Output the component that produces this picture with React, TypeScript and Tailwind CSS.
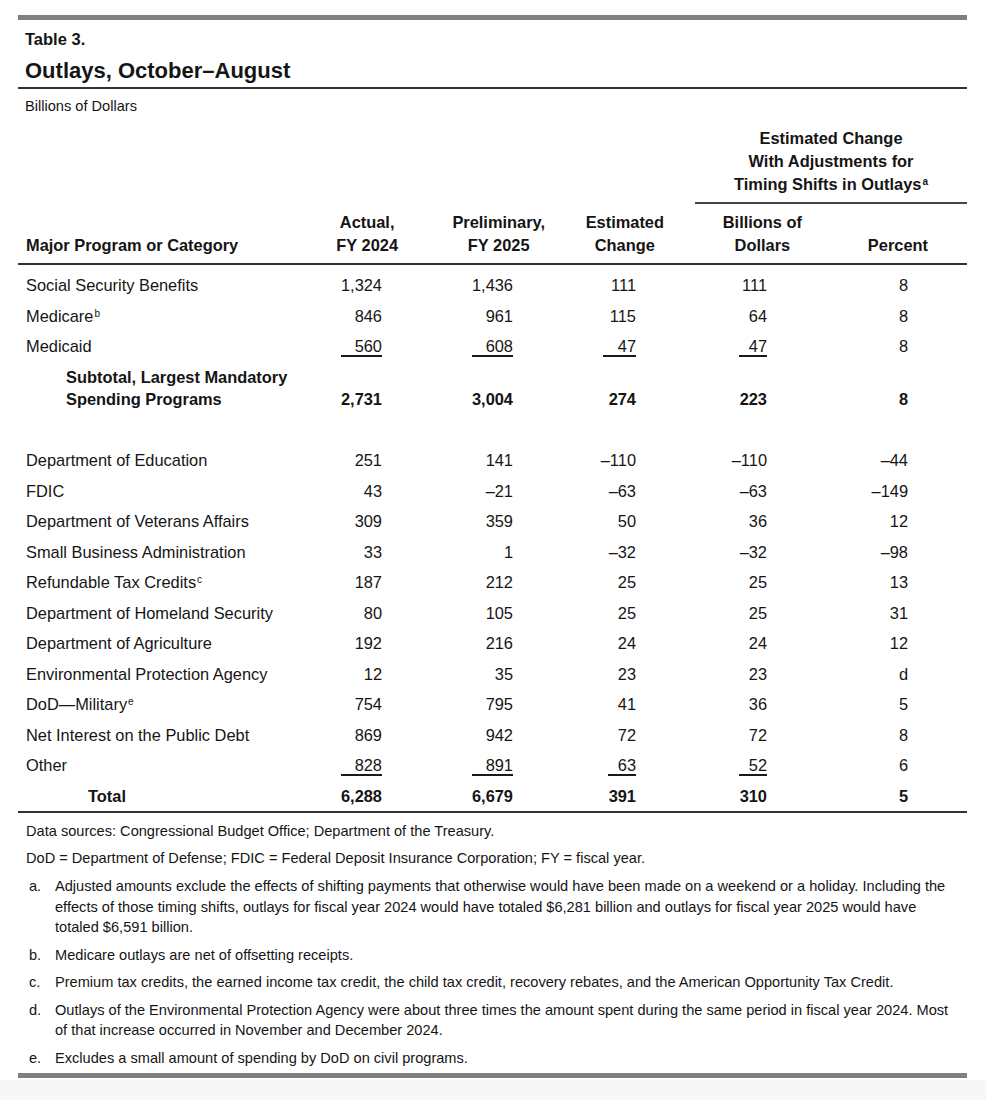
import React from "react";

type Row = {
  label: React.ReactNode;
  vals: string[];
  ul?: (number | null)[];
};

const GRID = "grid grid-cols-[282px_120px_140px_120px_140px_147px]";
const NUM_PAD = ["", "pr-[38px]", "pr-[47px]", "pr-[44px]", "pr-[53px]", "pr-[59px]"];
const UL_W: Record<number, string> = {
  41: "min-w-[41px]",
  33: "min-w-[33px]",
  28: "min-w-[28px]",
};

function Sup({ c }: { c: string }) {
  return <span className="relative -top-[5px] text-[10px] leading-none ml-[1px]">{c}</span>;
}

function Num({ v, col, ul }: { v: string; col: number; ul?: number | null }) {
  return (
    <div className={`flex justify-end items-center ${NUM_PAD[col]}`}>
      {ul ? (
        <span className={`inline-block text-right border-b-2 border-[#1a1a1a] leading-[17px] mt-[2px] ${UL_W[ul]}`}>{v}</span>
      ) : (
        <span>{v}</span>
      )}
    </div>
  );
}

function DataRow({ r }: { r: Row }) {
  return (
    <div className={`${GRID} h-[30.5px] items-center`}>
      <div className="pl-[8px] whitespace-nowrap">{r.label}</div>
      {r.vals.map((v, i) => (
        <Num key={i} v={v} col={i + 1} ul={r.ul ? r.ul[i] : null} />
      ))}
    </div>
  );
}

const top: Row[] = [
  { label: "Social Security Benefits", vals: ["1,324", "1,436", "111", "111", "8"] },
  { label: <>Medicare<Sup c="b" /></>, vals: ["846", "961", "115", "64", "8"] },
  { label: "Medicaid", vals: ["560", "608", "47", "47", "8"], ul: [41, 41, 33, 28, null] },
];

const bottom: Row[] = [
  { label: "Department of Education", vals: ["251", "141", "–110", "–110", "–44"] },
  { label: "FDIC", vals: ["43", "–21", "–63", "–63", "–149"] },
  { label: "Department of Veterans Affairs", vals: ["309", "359", "50", "36", "12"] },
  { label: "Small Business Administration", vals: ["33", "1", "–32", "–32", "–98"] },
  { label: <>Refundable Tax Credits<Sup c="c" /></>, vals: ["187", "212", "25", "25", "13"] },
  { label: "Department of Homeland Security", vals: ["80", "105", "25", "25", "31"] },
  { label: "Department of Agriculture", vals: ["192", "216", "24", "24", "12"] },
  { label: "Environmental Protection Agency", vals: ["12", "35", "23", "23", "d"] },
  { label: <>DoD—Military<Sup c="e" /></>, vals: ["754", "795", "41", "36", "5"] },
  { label: "Net Interest on the Public Debt", vals: ["869", "942", "72", "72", "8"] },
  { label: "Other", vals: ["828", "891", "63", "52", "6"], ul: [41, 41, 28, 28, null] },
];

const notes: [string, string][] = [
  [
    "a.",
    "Adjusted amounts exclude the effects of shifting payments that otherwise would have been made on a weekend or a holiday. Including the effects of those timing shifts, outlays for fiscal year 2024 would have totaled $6,281 billion and outlays for fiscal year 2025 would have totaled $6,591 billion.",
  ],
  ["b.", "Medicare outlays are net of offsetting receipts."],
  [
    "c.",
    "Premium tax credits, the earned income tax credit, the child tax credit, recovery rebates, and the American Opportunity Tax Credit.",
  ],
  [
    "d.",
    "Outlays of the Environmental Protection Agency were about three times the amount spent during the same period in fiscal year 2024. Most of that increase occurred in November and December 2024.",
  ],
  ["e.", "Excludes a small amount of spending by DoD on civil programs."],
];

export default function App() {
  return (
    <div className="w-[986px] h-[1100px] bg-[#f7f7f7] font-['Liberation_Sans',Arial,sans-serif] text-[#151515]">
      <div className="h-[1080px] bg-white pt-[15px]">
        <div className="ml-[18px] w-[949px]">
          <div className="h-[5px] bg-[#808080]" />
          <div className="pl-[7px] pt-[9px] text-[16.5px] font-bold leading-[20px]">Table 3.</div>
          <div className="pl-[7px] pt-[9px] pb-[3px] text-[22px] font-bold leading-[26px] border-b-2 border-[#333]">
            Outlays, October–August
          </div>
          <div className="pl-[7px] pt-[8px] text-[14.6px] leading-[18px]">Billions of Dollars</div>

          {/* Header */}
          <div className="text-[16.4px] font-bold leading-[23px] pt-[11.5px] border-b-2 border-[#333] pb-[5.5px]">
            <div className={GRID}>
              <div className="col-start-5 col-span-2 ml-[15px] text-center border-b-2 border-[#444] pb-[6px]">
                <div>Estimated Change</div>
                <div>With Adjustments for</div>
                <div>
                  Timing Shifts in Outlays<Sup c="a" />
                </div>
              </div>
            </div>
            <div className={`${GRID} items-end pt-[7.5px]`}>
              <div className="pl-[8px]">Major Program or Category</div>
              <div className="flex justify-end pr-[22px]">
                <div className="text-center">
                  <div>Actual,</div>
                  <div>FY 2024</div>
                </div>
              </div>
              <div className="flex justify-end pr-[15px]">
                <div className="text-center">
                  <div>Preliminary,</div>
                  <div>FY 2025</div>
                </div>
              </div>
              <div className="flex justify-end pr-[16px]">
                <div className="text-center">
                  <div>Estimated</div>
                  <div>Change</div>
                </div>
              </div>
              <div className="flex justify-end pr-[18px]">
                <div className="text-center">
                  <div>Billions of</div>
                  <div>Dollars</div>
                </div>
              </div>
              <div className="flex justify-end pr-[39px]">
                <div className="text-center">
                  <div>Percent</div>
                </div>
              </div>
            </div>
          </div>

          {/* Body */}
          <div className="text-[16.4px] leading-[20px] pt-[5.5px] border-b-2 border-[#333]">
            {top.map((r, i) => (
              <DataRow key={i} r={r} />
            ))}
            <div className={`${GRID} items-end font-bold leading-[22px] mt-[4.5px]`}>
              <div className="pl-[48px]">
                <div>Subtotal, Largest Mandatory</div>
                <div>Spending Programs</div>
              </div>
              <Num v="2,731" col={1} />
              <Num v="3,004" col={2} />
              <Num v="274" col={3} />
              <Num v="223" col={4} />
              <Num v="8" col={5} />
            </div>
            <div className="h-[35px]" />
            {bottom.map((r, i) => (
              <DataRow key={i} r={r} />
            ))}
            <div className={`${GRID} h-[30.5px] items-center font-bold`}>
              <div className="pl-[70px]">Total</div>
              <Num v="6,288" col={1} />
              <Num v="6,679" col={2} />
              <Num v="391" col={3} />
              <Num v="310" col={4} />
              <Num v="5" col={5} />
            </div>
          </div>

          {/* Footer */}
          <div className="text-[14.6px] leading-[20px]">
            <div className="pl-[8px] pt-[8px]">Data sources: Congressional Budget Office; Department of the Treasury.</div>
            <div className="pl-[8px] mt-[7px]">DoD = Department of Defense; FDIC = Federal Deposit Insurance Corporation; FY = fiscal year.</div>
            <div className="mt-[8px] leading-[20.5px]">
              {notes.map(([k, t], i) => (
                <div key={k} className={`flex ${i > 0 ? "mt-[7px]" : ""}`}>
                  <div className="w-[37px] shrink-0 pl-[11px]">{k}</div>
                  <div className="w-[900px]">{t}</div>
                </div>
              ))}
            </div>
          </div>
          <div className="h-[5px] bg-[#808080] mt-[4.5px]" />
        </div>
      </div>
    </div>
  );
}
